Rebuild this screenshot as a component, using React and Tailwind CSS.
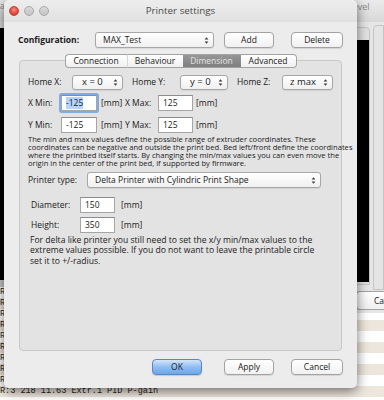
import React from 'react'

function Arrows() {
  return (
    <svg width="5" height="9" viewBox="0 0 5 9" className="shrink-0">
      <path d="M0.6 3.6L2.5 1.2L4.4 3.6Z M0.6 5.4L2.5 7.8L4.4 5.4Z" fill="#3a3a3a" />
    </svg>
  )
}

function Popup({ value, className, textClass = '' }) {
  return (
    <div
      className={`flex items-center justify-between rounded-[3px] border border-[#a7a7a7] bg-linear-to-b from-white to-[#f0f0f0] shadow-[0_1px_1px_rgba(0,0,0,0.08)] pl-[7px] pr-[4px] ${className}`}
    >
      <span className={`whitespace-nowrap ${textClass}`}>{value}</span>
      <Arrows />
    </div>
  )
}

function Button({ children, className }) {
  return (
    <div
      className={`flex items-center justify-center h-[16px] rounded-[4px] border border-[#a3a3a3] bg-linear-to-b from-white to-[#f1f1f1] shadow-[0_1px_1px_rgba(0,0,0,0.1)] ${className}`}
    >
      {children}
    </div>
  )
}

function Field({ value, className = '', focused = false }) {
  return (
    <div
      className={`flex items-center h-[16px] bg-white border border-[#a5a5a5] border-t-[#8c8c8c] pl-[4px] ${
        focused ? 'shadow-[0_0_0_2px_#82abe3] rounded-[1px]' : ''
      } ${className}`}
    >
      {focused ? <span className="bg-[#b3d3fb]">{value}</span> : <span>{value}</span>}
    </div>
  )
}

function Tab({ label, className = '', active = false }) {
  return (
    <div
      className={`flex items-center justify-center h-[14px] border-y border-[#a3a3a3] ${
        active
          ? 'bg-linear-to-b from-[#969696] to-[#7f7f7f] text-[#e2e2e2] border-[#7a7a7a]'
          : 'bg-linear-to-b from-white to-[#f0f0f0]'
      } ${className}`}
    >
      {label}
    </div>
  )
}

function Dialog() {
  return (
    <div className="absolute left-[4px] top-0 w-[353px] h-[388px] flex flex-col bg-[#ececec] rounded-[5px] shadow-[0_3px_12px_rgba(0,0,0,0.55)] overflow-hidden">
      {/* title bar */}
      <div className="relative h-[22px] shrink-0 flex items-center bg-linear-to-b from-[#ededed] to-[#e1e1e1]">
        <div className="flex items-center gap-[5px] ml-[5px]">
          <span className="w-[10px] h-[10px] rounded-full border border-[#b6463e] bg-[radial-gradient(circle_at_50%_35%,#ff8a7e,#e0473c_60%,#b72c23)]" />
          <span className="w-[10px] h-[10px] rounded-full border border-[#a8a8a8] bg-linear-to-b from-[#d9d9d9] to-[#c4c4c4]" />
          <span className="w-[10px] h-[10px] rounded-full border border-[#a8a8a8] bg-linear-to-b from-[#d9d9d9] to-[#c4c4c4]" />
        </div>
        <span className="absolute inset-x-0 text-center text-[9.8px] text-[#4a4a4a]">Printer settings</span>
      </div>

      {/* configuration row */}
      <div className="mt-[10px] flex items-center h-[16px]">
        <span className="ml-[14px] w-[77px] font-bold">Configuration:</span>
        <Popup value="MAX_Test" className="w-[119px] h-[16px]" />
        <Button className="ml-[10px] w-[50px]">Add</Button>
        <Button className="ml-[17px] w-[52px]">Delete</Button>
      </div>

      {/* tabs */}
      <div className="relative z-10 mt-[6px] flex justify-center">
        <Tab label="Connection" className="w-[62px] rounded-l-[4px] border-l" />
        <Tab label="Behaviour" className="w-[56px] border-l border-l-[#d6d6d6]" />
        <Tab label="Dimension" className="w-[58px]" active />
        <Tab label="Advanced" className="w-[56px] rounded-r-[4px] border-r" />
      </div>

      {/* tab content box */}
      <div className="-mt-[8px] mx-[15px] h-[291px] shrink-0 border border-[#c8c8c8] rounded-[4px] bg-[#e3e3e3] pt-[14px]">
        <div className="flex items-center h-[15px] pl-[8px]">
          <span className="w-[44px]">Home X:</span>
          <Popup value="x = 0" className="w-[51px] h-[15px] pl-[9px]" textClass="text-[9.5px]" />
          <span className="ml-[9px] w-[48px]">Home Y:</span>
          <Popup value="y = 0" className="w-[48px] h-[15px] pl-[9px]" textClass="text-[9.5px]" />
          <span className="ml-[9px] w-[45px]">Home Z:</span>
          <Popup value="z max" className="w-[51px] h-[15px] pl-[6px]" textClass="text-[9.5px]" />
        </div>

        <div className="mt-[5px] flex items-center pl-[8px]">
          <span className="w-[33px]">X Min:</span>
          <Field value="-125" className="w-[36px]" focused />
          <span className="ml-[4px] w-[24px]">[mm]</span>
          <span className="w-[33px]">X Max:</span>
          <Field value="125" className="w-[35px]" />
          <span className="ml-[3px]">[mm]</span>
        </div>

        <div className="mt-[6px] flex items-center pl-[8px]">
          <span className="w-[33px]">Y Min:</span>
          <Field value="-125" className="w-[36px]" />
          <span className="ml-[4px] w-[24px]">[mm]</span>
          <span className="w-[33px]">Y Max:</span>
          <Field value="125" className="w-[35px]" />
          <span className="ml-[3px]">[mm]</span>
        </div>

        <p className="mt-[2px] pl-[8px] text-[7.6px] leading-[8px] whitespace-nowrap">
          The min and max values define the possible range of extruder coordinates. These
          <br />
          coordinates can be negative and outside the print bed. Bed left/front define the coordinates
          <br />
          where the printbed itself starts. By changing the min/max values you can even move the
          <br />
          origin in the center of the print bed, if supported by firmware.
        </p>

        <div className="mt-[5px] flex items-center pl-[8px]">
          <span className="w-[59px]">Printer type:</span>
          <Popup value="Delta Printer with Cylindric Print Shape" className="w-[234px] h-[16px] pl-[7px]" />
        </div>

        <div className="mt-[9px] flex items-center pl-[11px]">
          <span className="w-[49px]">Diameter:</span>
          <Field value="150" className="w-[35px]" />
          <span className="ml-[6px]">[mm]</span>
        </div>

        <div className="mt-[4px] flex items-center pl-[11px]">
          <span className="w-[49px]">Height:</span>
          <Field value="350" className="w-[35px]" />
          <span className="ml-[6px]">[mm]</span>
        </div>

        <p className="mt-[2px] pl-[10px] text-[8.6px] leading-[10.3px] whitespace-nowrap">
          For delta like printer you still need to set the x/y min/max values to the
          <br />
          extreme values possible. If you do not want to leave the printable circle
          <br />
          set it to +/-radius.
        </p>
      </div>

      {/* bottom buttons */}
      <div className="mt-[8px] flex items-center">
        <div className="ml-[148px] w-[50px] h-[16px] flex items-center justify-center rounded-[4px] border border-[#5a86c4] bg-linear-to-b from-[#d3e6fb] via-[#90bdf1] to-[#6ba7ea] shadow-[0_1px_1px_rgba(0,0,0,0.15)]">
          OK
        </div>
        <Button className="ml-[22px] w-[50px]">Apply</Button>
        <Button className="ml-[17px] w-[52px]">Cancel</Button>
      </div>
    </div>
  )
}

function LeftWindow() {
  return (
    <div className="absolute left-0 top-0 w-[357px] h-[287px] flex flex-col bg-[#dcdcdc]">
      <div className="h-[22px] bg-linear-to-b from-[#e8e8e8] to-[#d6d6d6] text-[8.5px] text-[#8a8a8a] leading-[12px]">
        ac
      </div>
      <div className="mt-[6px] h-[252px] bg-black" />
      <div className="flex-1 bg-[#c7c7c7]" />
    </div>
  )
}

const logLines = [
  'R:3 212 11.52 Extr.1 PID P-gain',
  'R:3 213 11.54 Extr.1 PID P-gain',
  'R:3 214 11.56 Extr.1 PID P-gain',
  'R:3 215 11.58 Extr.1 PID P-gain',
  'R:3 216 11.60 Extr.1 PID P-gain',
  'R:3 217 11.61 Extr.1 PID P-gain',
  'R:3 217 11.62 Extr.1 PID P-gain',
  'R:3 218 11.62 Extr.1 PID P-gain',
  'R:3 218 11.63 Extr.1 PID P-gain',
  'R:3 218 11.63 Extr.1 PID P-gain',
]

function LogPanel() {
  return (
    <div className="absolute left-0 top-[287px] w-full h-[113px] flex flex-col font-['Liberation_Mono',monospace] text-[8.5px] text-[#222]">
      {logLines.map((l, i) => (
        <div key={i} className={`h-[11px] shrink-0 leading-[11px] ${i % 2 === 1 ? 'bg-[#ede6dc]' : 'bg-white'}`}>
          {l}
        </div>
      ))}
    </div>
  )
}

function RightWindow() {
  return (
    <div className="absolute left-[330px] top-0 w-[54px] h-[313px] flex flex-col bg-[#e6e6e6]">
      <div className="h-[22px] shrink-0 bg-linear-to-b from-[#ebebeb] to-[#d8d8d8] text-[9px] text-[#8a8a8a] leading-[14px] pl-[18px]">
        Level
      </div>
      <div className="flex h-[268px]">
        <div className="mt-[5px] w-[40px] h-[258px] rounded-tr-[4px] border border-[#c4c4c4] bg-[#e2e2e2] pt-[12px]">
          <div className="w-[38px] h-[242px] bg-black" />
        </div>
        <div className="ml-[3px] mt-[3px] flex-1 h-[265px] rounded-tl-[4px] border border-[#c4c4c4] bg-[#e4e4e4]" />
      </div>
      <div className="mt-[1px] ml-[26px] w-[28px] h-[19px] rounded-l-[4px] border border-r-0 border-[#a3a3a3] bg-linear-to-b from-white to-[#f0f0f0] pl-[17px] text-[8.5px] leading-[17px] overflow-hidden">
        Ca
      </div>
    </div>
  )
}

export default function App() {
  return (
    <div className="relative w-[384px] h-[400px] overflow-hidden bg-white font-['Open_Sans',sans-serif] text-[8.5px] text-[#1a1a1a]">
      <LeftWindow />
      <LogPanel />
      <RightWindow />
      <Dialog />
    </div>
  )
}
